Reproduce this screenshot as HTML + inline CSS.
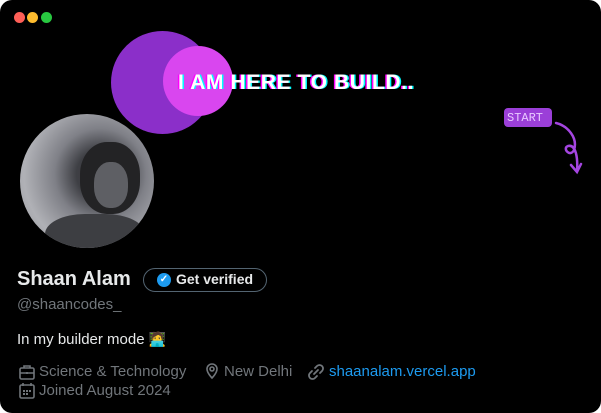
<!DOCTYPE html>
<html><head><style>
body{margin:0;width:601px;height:413px;background:#fff;overflow:hidden;font-family:"Liberation Sans",sans-serif}
.card{position:absolute;left:0;top:0;width:601px;height:413px;background:#000;border-radius:12px;overflow:hidden}
.dot{position:absolute;top:12px;width:11px;height:11px;border-radius:50%}
.t{position:absolute;white-space:nowrap}
.g{color:#71767b;font-size:15px}
</style></head><body><div class="card">
<div class="dot" style="left:14px;background:#fe5f57"></div>
<div class="dot" style="left:27px;background:#febc2e"></div>
<div class="dot" style="left:41px;background:#28c840"></div>
<div style="position:absolute;left:111px;top:31px;width:103px;height:103px;border-radius:50%;background:#8b2fc9"></div>
<div style="position:absolute;left:163px;top:46px;width:70px;height:70px;border-radius:50%;background:#d946ef"></div>
<div class="t" style="left:178px;top:71px;font-size:21px;font-weight:bold;color:#fff;letter-spacing:0.6px;text-shadow:-1.5px 0 #f0f,1.5px 0 #0ff">I AM HERE TO BUILD..</div>
<div style="position:absolute;left:504px;top:108px;width:48px;height:19px;background:#9b3fd8;border-radius:4px"></div>
<div class="t" style="left:507px;top:111px;font-size:12px;line-height:14px;color:#e9c9ff;font-family:'Liberation Mono',monospace">START</div>
<svg style="position:absolute;left:550px;top:118px" width="40" height="60" viewBox="0 0 40 60"><path d="M6 5 C18 8 28 20 24 32 C20 40 12 30 18 28 C26 26 28 40 27 54 M21 47 L27 54 L31 46" fill="none" stroke="#a445e0" stroke-width="2.5" stroke-linecap="round"/></svg>
<div style="position:absolute;left:20px;top:114px;width:134px;height:134px;border-radius:50%;background:radial-gradient(circle at 60% 45%,#3a3a3c 0,#3e3f44 22%,#7f8087 42%,#b0b1b6 70%,#8f9096 100%);overflow:hidden">
<div style="position:absolute;left:60px;top:28px;width:60px;height:72px;border-radius:45%;background:#232325"></div>
<div style="position:absolute;left:25px;top:100px;width:100px;height:50px;border-radius:40%;background:#3d3e42"></div>
<div style="position:absolute;left:74px;top:48px;width:34px;height:46px;border-radius:45%;background:#5e5f64"></div>
</div>
<div class="t" style="left:17px;top:268px;font-size:20px;font-weight:bold;color:#e7e9ea">Shaan Alam</div>
<div style="position:absolute;left:143px;top:268px;width:124px;height:24px;border:1px solid #536471;border-radius:13px;box-sizing:border-box"></div>
<div style="position:absolute;left:157px;top:273px;width:14px;height:14px;border-radius:50%;background:#1d9bf0;color:#fff;font-size:10px;line-height:14px;text-align:center;font-weight:bold">✓</div>
<div class="t" style="left:176px;top:271px;font-size:14px;font-weight:bold;color:#e7e9ea">Get verified</div>
<div class="t g" style="left:17px;top:296px">@shaancodes_</div>
<div class="t" style="left:17px;top:331px;font-size:15px;color:#e7e9ea">In my builder mode <span style="font-size:14px">🧑‍💻</span></div>
<svg style="position:absolute;left:18px;top:363px" width="18" height="18" viewBox="0 0 18 18" fill="none" stroke="#71767b" stroke-width="1.6"><rect x="2" y="5" width="14" height="11" rx="1.5"/><path d="M6 5V3h6v2M2 10h14M9 9v2"/></svg>
<div class="t g" style="left:39px;top:363px">Science &amp; Technology</div>
<svg style="position:absolute;left:203px;top:362px" width="18" height="18" viewBox="0 0 18 18" fill="none" stroke="#71767b" stroke-width="1.6"><path d="M9 16s-5-5-5-9a5 5 0 0 1 10 0c0 4-5 9-5 9z"/><circle cx="9" cy="7" r="2"/></svg>
<div class="t g" style="left:224px;top:363px">New Delhi</div>
<svg style="position:absolute;left:307px;top:363px" width="18" height="18" viewBox="0 0 18 18" fill="none" stroke="#71767b" stroke-width="1.8" stroke-linecap="round"><path d="M8 5l2-2a3 3 0 0 1 5 5l-2 2M10 13l-2 2a3 3 0 0 1-5-5l2-2M7 11l4-4"/></svg>
<div class="t" style="left:329px;top:363px;font-size:15px;color:#1d9bf0">shaanalam.vercel.app</div>
<svg style="position:absolute;left:18px;top:382px" width="18" height="18" viewBox="0 0 18 18" fill="none" stroke="#71767b" stroke-width="1.6"><rect x="2" y="3" width="14" height="13" rx="1.5"/><path d="M5 1v3M13 1v3"/><g fill="#71767b" stroke="none"><rect x="5" y="8" width="2" height="2"/><rect x="8" y="8" width="2" height="2"/><rect x="11" y="8" width="2" height="2"/><rect x="5" y="11" width="2" height="2"/><rect x="8" y="11" width="2" height="2"/></g></svg>
<div class="t g" style="left:39px;top:382px">Joined August 2024</div>
</div></body></html>
